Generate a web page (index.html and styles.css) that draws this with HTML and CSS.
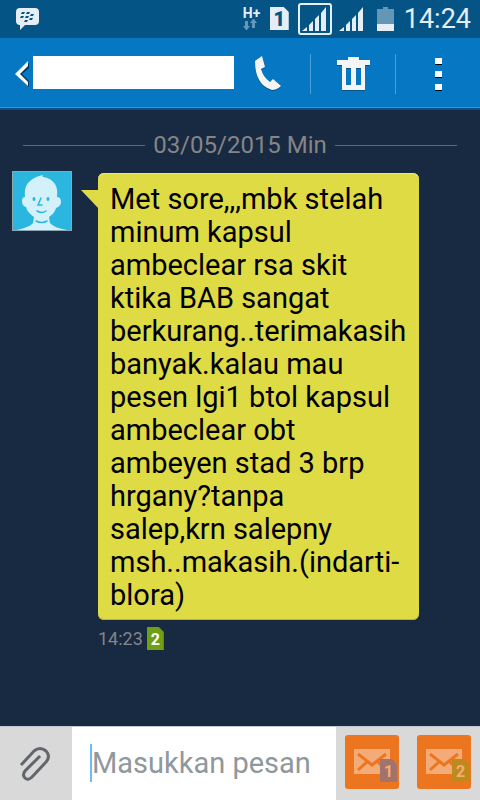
FILE: index.html
```html
<!DOCTYPE html>
<html lang="id">
<head>
  <meta charset="UTF-8">
  <meta name="viewport" content="width=device-width, initial-scale=1.0">
  <title>Pesan</title>
  <link rel="stylesheet" href="styles.css">
</head>
<body>
  <div class="status-bar">
    <svg class="bbm" width="24" height="24" viewBox="0 0 24 24">
      <path fill="#e6eef5" d="M4 1h15q4 0 4 4v9q0 4-4 4H9l-5 5v-5q-4 0-4-4V5q0-4 4-4z"/>
      <path fill="#045486" d="M6 5h3l-1 2H5zM11 5h3l-1 2h-3zM5 9h3l-1 2H4zM10 9h3l-1 2H9zM15 7h3l-1 2h-3zM14 11h3l-1 2h-3zM9 13h3l-1 2H8z"/>
    </svg>
    <div class="network">
      <span>H+</span>
      <svg width="14" height="12" viewBox="0 0 14 12">
        <path fill="#6496b8" d="M2 2h3v5h2l-3 4h-1L0 7h2zM9 9V4H7l3-4h1l3 4h-2v5z"/>
      </svg>
    </div>
    <div class="sim-status">1</div>
    <div class="signal signal-active">
      <svg width="26" height="26" viewBox="0 0 26 26">
        <path fill="#e6eef5" d="M0 25l5-4v4zM7 19l4-4v10H7zM13 13l4-4v16h-4zM19 7l5-6v24h-5z"/>
      </svg>
    </div>
    <div class="signal">
      <svg width="26" height="26" viewBox="0 0 26 26">
        <path fill="#e6eef5" d="M0 25l5-4v4zM7 19l4-4v10H7zM13 13l4-4v16h-4zM19 7l5-6v24h-5z"/>
      </svg>
    </div>
    <svg class="battery" width="17" height="24" viewBox="0 0 17 24">
      <path fill="#6496b8" d="M0 2h6V0h5v2h6v15H0z"/>
      <path fill="#e6eef5" d="M0 17h17v7H0z"/>
    </svg>
    <time class="clock">14:24</time>
  </div>

  <header class="app-bar">
    <button class="back" aria-label="Kembali">
      <svg width="15" height="28" viewBox="0 0 15 28">
        <path fill="#04375a" d="M14 3v5l-7 6 7 7v6L2 15z"/>
        <path fill="#fff" d="M13 1v5l-8 8 8 8v4L0 14z"/>
      </svg>
    </button>
    <div class="contact-name"></div>
    <button class="action call" aria-label="Panggil">
      <svg width="28" height="36" viewBox="0 0 28 36">
        <path fill="#045486" d="M1 6l7-5 3 11-4 2q2 8 9 13l3-3 8 7q-4 4-9 4Q1 30 1 6z"/>
        <path fill="#f5f5f5" d="M1 5l7-5 3 11-4 2q2 8 9 13l3-3 8 7q-4 4-9 4Q1 29 1 5z"/>
      </svg>
    </button>
    <button class="action delete" aria-label="Hapus">
      <svg width="33" height="34" viewBox="0 0 33 34">
        <path fill="#045486" d="M0 6h33v3h-5v25H5V9H0z"/>
        <path fill="#f5f5f5" d="M0 3h11V0h11v3h11v5h-5v25H5V8H0z"/>
        <path fill="#045486" d="M9 11h5v17H9zM19 11h5v17h-5z"/>
        <path fill="#0577c3" d="M9 12h5v16H9zM19 12h5v16h-5z"/>
      </svg>
    </button>
    <button class="action more" aria-label="Opsi lainnya">
      <svg width="7" height="33" viewBox="0 0 7 33">
        <path d="M0 1h7v6H0zM0 14h7v6H0zM0 27h7v6H0z"/>
        <path fill="#fff" d="M0 0h7v6H0zM0 13h7v6H0zM0 26h7v6H0z"/>
      </svg>
    </button>
  </header>

  <main class="conversation">
    <div class="date">03/05/2015 Min</div>
    <div class="message">
      <svg class="avatar" width="60" height="60" viewBox="0 0 60 60">
        <path fill="#2bb6e0" d="M0 0h60v60H0z"/>
        <path fill="#d3f1fa" d="M5 59q13-3 16-7l1-6q-7-5-8-10-4-1-4-6 0-4 3-4-1-9 3-14 5-6 15-8-1 2 0 2 8 1 12 7 3 5 2 13 4 0 4 5 0 4-5 6-1 5-7 9l1 6q4 5 17 7z"/>
        <path fill="none" stroke="#2bb6e0" stroke-width="1.5" stroke-linecap="round" d="M29 27l-3 7h4M25 40q5 3 9 0M24 50q6 3 11 0"/>
        <ellipse fill="#2bb6e0" cx="22" cy="28" rx="1.5" ry="2"/>
        <ellipse fill="#2bb6e0" cx="36" cy="28" rx="1.5" ry="2"/>
        <path fill="none" stroke="#8fa5b0" d="M.5.5h59v59H.5z"/>
      </svg>
      <div class="message-body">
        <p class="bubble">Met sore,,,mbk stelah minum kapsul ambeclear rsa skit ktika BAB sangat berkurang..terimakasih banyak.kalau mau pesen lgi1 btol kapsul ambeclear obt ambeyen stad 3 brp hrgany?tanpa salep,krn salepny msh..makasih.(indarti-blora)</p>
        <div class="meta">
          <time>14:23</time>
          <span class="sim sim-green">2</span>
        </div>
      </div>
    </div>
  </main>

  <form class="composer">
    <button type="button" class="attach" aria-label="Lampirkan">
      <svg width="32" height="36" viewBox="0 0 32 36">
        <path fill="none" stroke="#62656b" stroke-width="3" stroke-linecap="square" d="M2 18L14 5q6-5 12 0 5 5 0 11L12 31q-4 4-7 1t0-7l14-14"/>
      </svg>
    </button>
    <div class="field">
      <input type="text" placeholder="Masukkan pesan" aria-label="Masukkan pesan">
    </div>
    <div class="send-buttons">
      <button type="button" class="send" aria-label="Kirim dengan SIM 1">
        <svg width="36" height="25" viewBox="0 0 36 25">
          <path fill="#f5ab78" d="M0 0h36v25H0z"/>
          <path fill="none" stroke="#ec761f" stroke-width="3" d="M4 5l14 11L32 5M4 21l9-8M23 12l9 9"/>
        </svg>
        <span class="sim sim-gray">1</span>
      </button>
      <button type="button" class="send" aria-label="Kirim dengan SIM 2">
        <svg width="36" height="25" viewBox="0 0 36 25">
          <path fill="#f5ab78" d="M0 0h36v25H0z"/>
          <path fill="none" stroke="#ec761f" stroke-width="3" d="M4 5l14 11L32 5M4 21l9-8M23 12l9 9"/>
        </svg>
        <span class="sim sim-gold">2</span>
      </button>
    </div>
  </form>
</body>
</html>
```

FILE: styles.css
```css
* {
  box-sizing: border-box;
}

body {
  margin: 0;
  min-height: 100vh;
  display: flex;
  flex-direction: column;
  font-family: Roboto, sans-serif;
  background-color: #182a42;
}

button {
  padding: 0;
  border: none;
  background: none;
  font-family: inherit;
  cursor: pointer;
}

svg {
  display: block;
}

/* status bar */
.status-bar {
  display: flex;
  align-items: center;
  height: 38px;
  padding: 0 9px 1px 16px;
  background-color: #045486;
  color: #e6eef5;
}

.bbm {
  margin-right: auto;
}

.network {
  width: 18px;
  margin-right: 9px;
  font-size: 14px;
  font-weight: 700;
  line-height: 12px;
}

.sim-status {
  width: 19px;
  height: 23px;
  margin-right: 9px;
  background-color: #e6eef5;
  clip-path: polygon(0 0, 14px 0, 100% 5px, 100% 100%, 0 100%);
  color: #045486;
  font-size: 20px;
  font-weight: 900;
  line-height: 24px;
  text-align: center;
}

.signal {
  margin-right: 12px;
}

.signal-active {
  margin-right: 7px;
  padding: 1px 2px;
  border: 2px solid #e6eef5;
  border-radius: 3px;
}

.battery {
  margin-right: 10px;
}

.clock {
  font-size: 27px;
}

/* app bar */
.app-bar {
  display: flex;
  align-items: center;
  height: 72px;
  padding: 0 0 2px 15px;
  background-color: #0577c3;
  border-bottom: 2px solid #04508a;
  box-shadow: inset 0 -1px #3a92d0;
}

.app-bar button {
  margin-top: 4px;
}

.back {
  margin-right: 3px;
}

.contact-name {
  flex: 1;
  height: 33px;
  background-color: #fff;
}

.action {
  display: flex;
  align-items: center;
  justify-content: center;
  width: 85px;
  height: 40px;
}

.call {
  width: 76px;
  padding-right: 8px;
}

.delete,
.more {
  border-left: 1px solid #4a9fd8;
}

/* conversation */
.conversation {
  flex: 1;
  padding: 20px 12px;
}

.date {
  display: flex;
  align-items: center;
  gap: 8px;
  margin: 0 11px 11px;
  color: #858585;
  font-size: 24px;
  line-height: 30px;
}

.date::before,
.date::after {
  content: "";
  flex: 1;
  height: 1px;
  background-color: #5f6873;
}

.message {
  display: flex;
  align-items: flex-start;
  gap: 26px;
}

.avatar {
  flex: none;
}

.message-body {
  flex: 1;
  margin: 2px 49px 0 0;
}

.bubble {
  position: relative;
  margin: 0;
  padding: 10px 12px 8px;
  border-radius: 6px;
  background-color: #dedb45;
  box-shadow: inset 0 1px #e8e696, inset 0 -1px #b5b34c;
  color: #000;
  font-size: 29px;
  line-height: 33px;
}

.bubble::before {
  content: "";
  position: absolute;
  top: 17px;
  left: -17px;
  width: 18px;
  height: 19px;
  background-color: #dedb45;
  clip-path: polygon(0 0, 100% 0, 100% 100%);
}

.meta {
  display: flex;
  align-items: center;
  gap: 4px;
  margin-top: 7px;
  color: #858585;
  font-size: 18px;
}

.sim {
  width: 17px;
  height: 23px;
  clip-path: polygon(0 0, 12px 0, 100% 5px, 100% 100%, 0 100%);
  font-size: 16px;
  font-weight: 700;
  line-height: 26px;
  text-align: center;
}

.sim-green {
  background-color: #6f9f12;
  color: #fff;
}

.sim-gray {
  background-color: #a0746a;
  color: #f5ab78;
}

.sim-gold {
  background-color: #bf8a1c;
  color: #f5ab78;
}

/* composer */
.composer {
  display: flex;
  height: 74px;
  border-top: 1px solid #c6cad0;
  background-color: #d9d9d9;
}

.attach {
  flex: none;
  display: flex;
  align-items: center;
  justify-content: center;
  width: 72px;
}

.field {
  flex: 1;
  display: flex;
  align-items: center;
  min-width: 0;
  padding: 0 18px 2px;
  background-color: #fff;
}

.field::before {
  content: "";
  width: 2px;
  height: 38px;
  background-color: #66bdfb;
}

.field input {
  flex: 1;
  min-width: 0;
  padding: 0;
  border: none;
  outline: none;
  background: none;
  font-family: inherit;
  font-size: 29px;
}

.field input::placeholder {
  color: #8f989c;
}

.send-buttons {
  flex: none;
  display: flex;
  gap: 18px;
  padding: 8px 9px;
}

.send {
  position: relative;
  display: flex;
  justify-content: center;
  width: 54px;
  height: 54px;
  padding-top: 14px;
  border-radius: 3px;
  background-color: #ec761f;
}

.send .sim {
  position: absolute;
  right: 2px;
  bottom: 7px;
}
```
